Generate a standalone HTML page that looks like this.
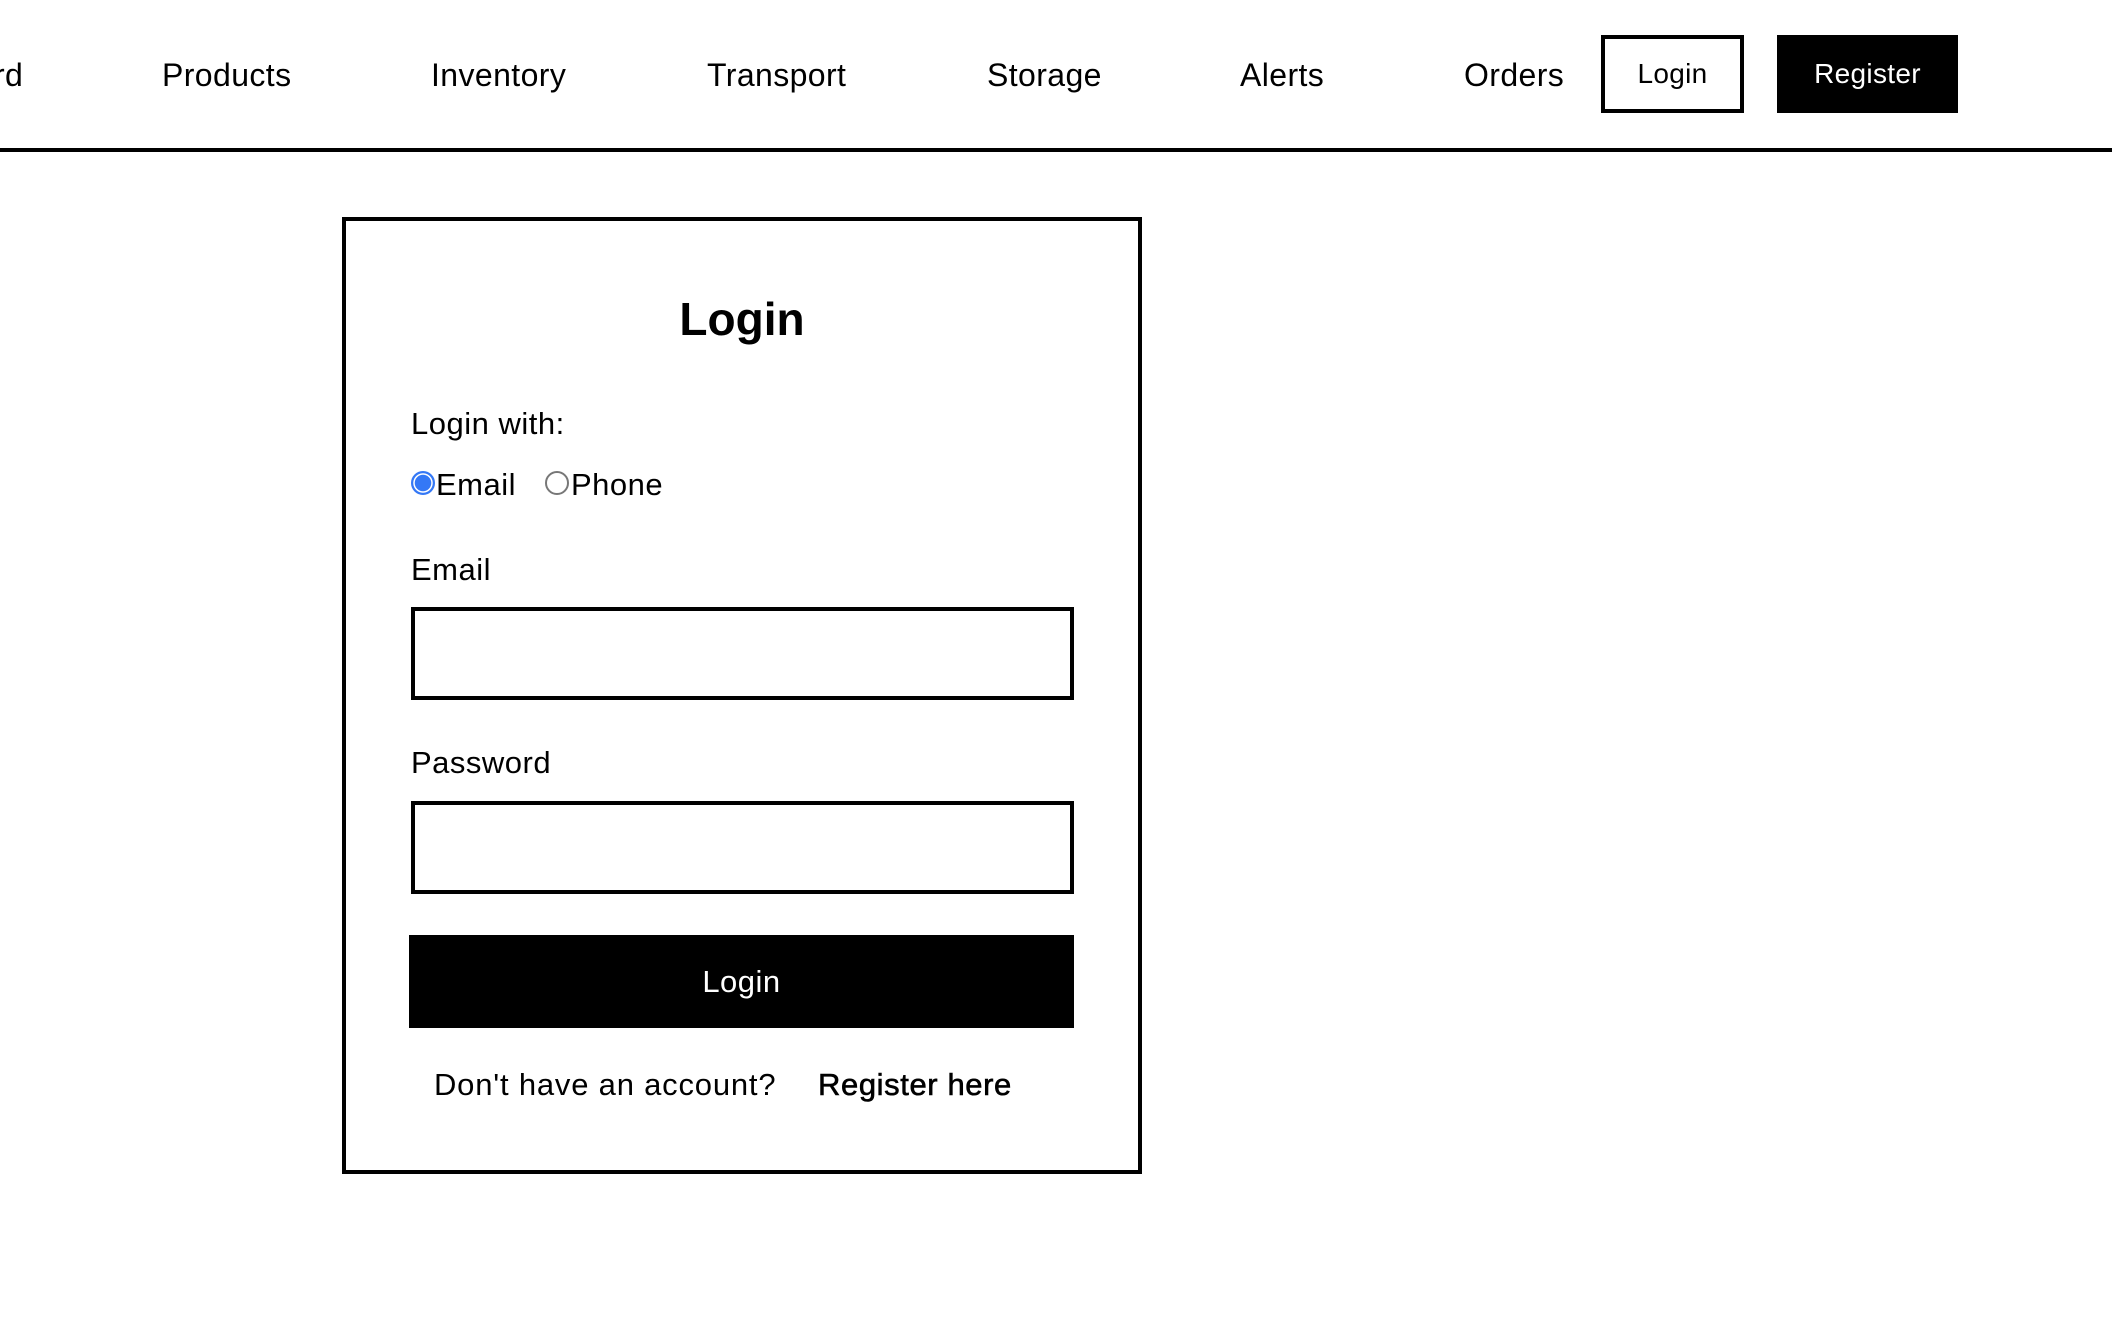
<!DOCTYPE html>
<html><head><meta charset="utf-8"><style>
*{margin:0;padding:0;box-sizing:border-box}
body{width:2112px;height:1324px;background:#fff;font-family:"Liberation Sans",sans-serif;color:#000;position:relative;overflow:hidden}
.a{position:absolute;white-space:nowrap;line-height:1}
.nav{font-size:32px;top:59px;letter-spacing:0.4px}
.btn{position:absolute;top:35px;height:78px;font-size:28px;display:flex;align-items:center;justify-content:center;letter-spacing:0.3px}
.line{position:absolute;left:0;top:148px;width:2112px;height:4px;background:#000}
.card{position:absolute;left:342px;top:217px;width:800px;height:957px;border:4px solid #000}
.inp{position:absolute;left:411px;width:663px;height:93px;border:4px solid #000}
.lbl{font-size:31px;letter-spacing:0.5px}
.radio{position:absolute;width:24px;height:24px;border-radius:50%}
</style></head><body>
<div class="a nav" style="left:-6px">rd</div>
<div class="a nav" style="left:162px">Products</div>
<div class="a nav" style="left:431px">Inventory</div>
<div class="a nav" style="left:707px">Transport</div>
<div class="a nav" style="left:987px">Storage</div>
<div class="a nav" style="left:1240px">Alerts</div>
<div class="a nav" style="left:1464px">Orders</div>
<div class="btn" style="left:1601px;width:143px;border:4px solid #000">Login</div>
<div class="btn" style="left:1777px;width:181px;background:#000;color:#fff">Register</div>
<div class="line"></div>
<div class="card"></div>
<div class="a" style="left:342px;width:800px;text-align:center;top:296px;font-size:46px;font-weight:bold">Login</div>
<div class="a lbl" style="left:411px;top:408px">Login with:</div>
<div class="radio" style="left:411px;top:471px;border:2px solid #3478f6;background:radial-gradient(circle,#3478f6 0 8px,#fff 8.5px 9.5px,#3478f6 10px)"></div>
<div class="a lbl" style="left:436px;top:469px">Email</div>
<div class="radio" style="left:545px;top:471px;border:2px solid #777"></div>
<div class="a lbl" style="left:571px;top:469px">Phone</div>
<div class="a lbl" style="left:411px;top:554px">Email</div>
<div class="inp" style="top:607px"></div>
<div class="a lbl" style="left:411px;top:747px">Password</div>
<div class="inp" style="top:801px"></div>
<div style="position:absolute;left:409px;top:935px;width:665px;height:93px;background:#000;color:#fff;font-size:31px;letter-spacing:0.5px;display:flex;align-items:center;justify-content:center">Login</div>
<div class="a lbl" style="left:434px;top:1069px;letter-spacing:0.8px">Don't have an account?</div>
<div class="a lbl" style="left:818px;top:1069px;letter-spacing:0.6px;-webkit-text-stroke:0.6px #000">Register here</div>
</body></html>
